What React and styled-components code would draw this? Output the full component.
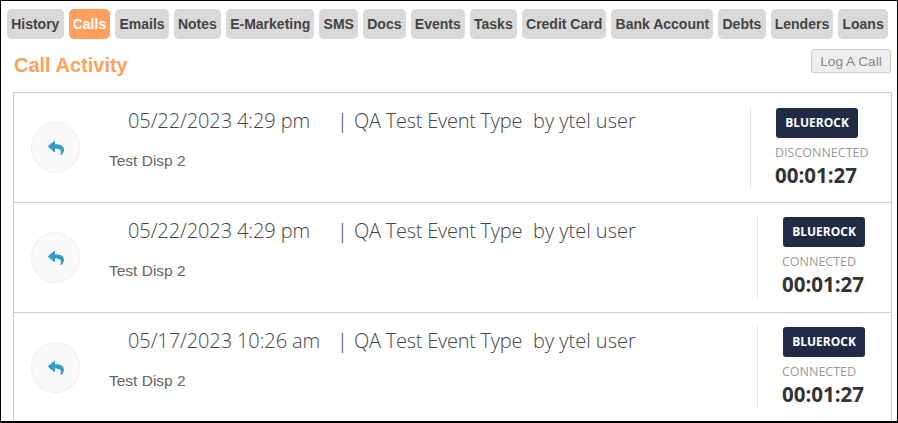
import React from "react";
import styled, { createGlobalStyle } from "styled-components";
import { FaReply } from "react-icons/fa";

const tabs = ["History", "Calls", "Emails", "Notes", "E-Marketing", "SMS", "Docs", "Events", "Tasks", "Credit Card", "Bank Account", "Debts", "Lenders", "Loans"];

const calls = [
  { date: "05/22/2023 4:29 pm", status: "DISCONNECTED", wide: true },
  { date: "05/22/2023 4:29 pm", status: "CONNECTED" },
  { date: "05/17/2023 10:26 am", status: "CONNECTED" },
];

const App = () => (
  <Frame>
    <GlobalStyle />
    <TabBar>
      {tabs.map((t) => (
        <Tab key={t} $active={t === "Calls"}>{t}</Tab>
      ))}
    </TabBar>
    <Header>
      <Title>Call Activity</Title>
      <LogButton>Log A Call</LogButton>
    </Header>
    <List>
      {calls.map((c, i) => (
        <Row key={i}>
          <CircleButton>
            <FaReply />
          </CircleButton>
          <Main>
            <Headline>
              <DateText>{c.date}</DateText>
              <Separator>|</Separator>
              <EventName>QA Test Event Type</EventName>
              <span>by ytel user</span>
            </Headline>
            <Disposition>Test Disp 2</Disposition>
          </Main>
          <Side $wide={c.wide}>
            <Badge>BLUEROCK</Badge>
            <Status>{c.status}</Status>
            <Duration>00:01:27</Duration>
          </Side>
        </Row>
      ))}
    </List>
  </Frame>
);

const GlobalStyle = createGlobalStyle`
  html, body {
    margin: 0;
    padding: 0;
    background: #fff;
  }
`;

const Frame = styled.div`
  box-sizing: border-box;
  width: 898px;
  height: 423px;
  border: solid #000;
  border-width: 1px 1px 2px 1px;
  overflow: hidden;
  background: #fff;
  font-family: "Liberation Sans", Arial, sans-serif;
`;

const TabBar = styled.div`
  display: flex;
  gap: 5px;
  padding: 8px 0 0 6px;
`;

const Tab = styled.div`
  height: 30px;
  line-height: 30px;
  padding: 0 4.17px;
  border-radius: 5px;
  font-size: 14px;
  font-weight: 700;
  white-space: nowrap;
  color: ${(p) => (p.$active ? "#fff" : "#444")};
  background: ${(p) => (p.$active ? "#ffa05c" : "#d9d9d9")};
`;

const Header = styled.div`
  display: flex;
  justify-content: space-between;
  align-items: flex-start;
  height: 43px;
  padding: 10px 6px 0 13px;
`;

const Title = styled.h3`
  margin: 4px 0 0;
  font-size: 20px;
  line-height: 24px;
  font-weight: 700;
  color: #ffa05c;
`;

const LogButton = styled.button`
  box-sizing: border-box;
  width: 80px;
  height: 24px;
  padding: 0;
  border: 1px solid #ccc;
  border-radius: 3px;
  background: #eee;
  color: #888;
  font-family: inherit;
  font-size: 13.7px;
`;

const List = styled.div`
  margin: 0 5px 0 12px;
  border: solid #ccc;
  border-width: 0 1px 1px;
`;

const Row = styled.div`
  display: flex;
  align-items: center;
  box-sizing: border-box;
  height: 110px;
  padding-left: 17px;
  border-top: 1px solid #ccc;
`;

const CircleButton = styled.div`
  display: flex;
  align-items: center;
  justify-content: center;
  box-sizing: border-box;
  flex: none;
  width: 49px;
  height: 51px;
  border: 1px solid #eee;
  border-radius: 50%;
  background: #f9f9f9;
  color: #329ccb;
  font-size: 16px;
`;

const Main = styled.div`
  align-self: flex-start;
  flex: 1;
  min-width: 0;
  margin-top: 14px;
  padding-left: 29px;
`;

const Headline = styled.div`
  display: flex;
  padding-left: 19px;
  font-family: "Open Sans", sans-serif;
  font-weight: 300;
  font-size: 20px;
  line-height: 28px;
  color: #444;
  white-space: nowrap;
`;

const DateText = styled.span`
  width: 209px;
  letter-spacing: -0.1px;
`;

const Separator = styled.span`
  width: 17px;
`;

const EventName = styled.span`
  width: 179px;
  letter-spacing: -0.25px;
`;

const Disposition = styled.div`
  margin-top: 16px;
  font-size: 15.5px;
  line-height: 20px;
  color: #666;
`;

const Side = styled.div`
  align-self: flex-start;
  box-sizing: border-box;
  flex: none;
  width: ${(p) => (p.$wide ? "141px" : "134px")};
  height: 82px;
  margin-top: 13px;
  padding-left: 25px;
  border-left: 1px solid #e5e5e5;
  font-family: "Open Sans", sans-serif;

  ${Row}:first-child & {
    margin-top: 14px;
  }
`;

const Badge = styled.div`
  box-sizing: border-box;
  width: 82px;
  height: 30px;
  margin-top: 1px;
  line-height: 30px;
  text-align: center;
  border-radius: 3px;
  background: #1f2a44;
  color: #fff;
  font-size: 12px;
  font-weight: 700;
`;

const Status = styled.div`
  margin: 7px 0 0 -1px;
  font-size: 12.5px;
  line-height: 16px;
  color: #999;
  white-space: nowrap;
`;

const Duration = styled.div`
  margin: 1px 0 0 -1px;
  font-size: 20.5px;
  line-height: 26px;
  font-weight: 700;
  color: #333;
`;

export default App;
